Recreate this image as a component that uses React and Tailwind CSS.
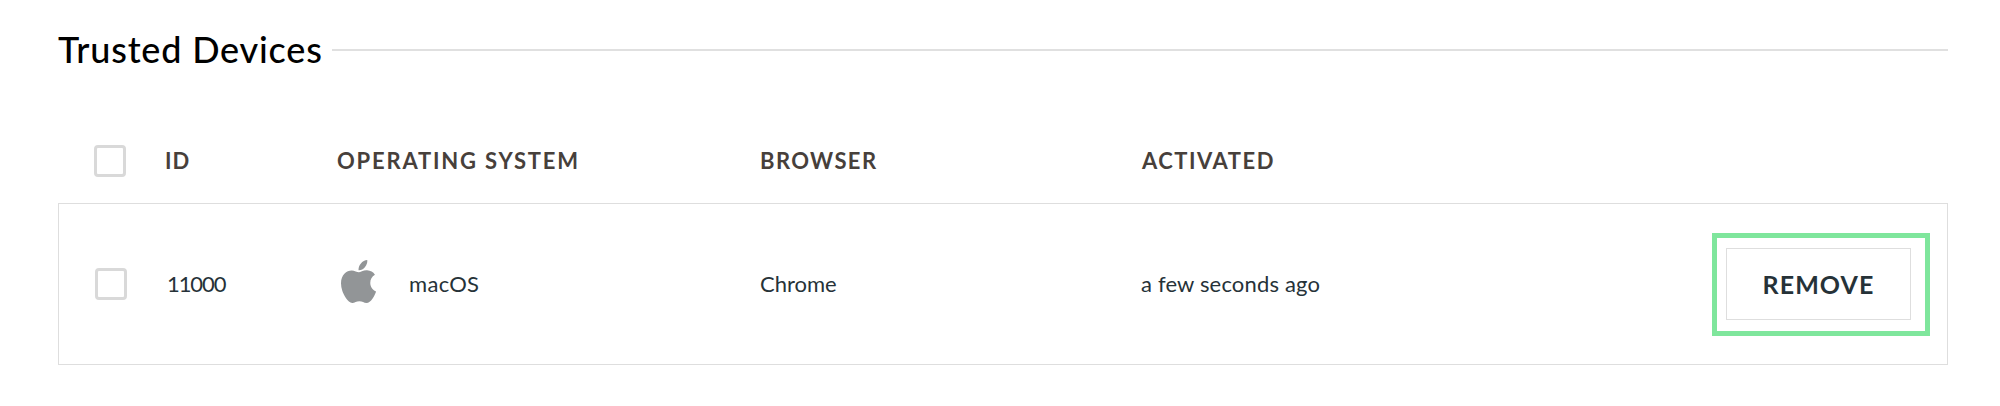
const devices = [
  { id: "11000", os: "macOS", browser: "Chrome", activated: "a few seconds ago" },
];

function Checkbox({ label }) {
  return (
    <span
      role="checkbox"
      aria-checked="false"
      aria-label={label}
      className="block size-8 rounded-[4px] border-3 border-[#d9d9d9] bg-white"
    />
  );
}

function AppleIcon() {
  return (
    <svg viewBox="4 31 376 449" preserveAspectRatio="none" className="mb-1.5 h-[43px] w-[35px] fill-[#929597]" aria-hidden="true">
      <path d="M318.7 268.7c-.2-36.700 16.400-64.400 50-84.800-18.800-26.900-47.200-41.700-84.700-44.600-35.500-2.800-74.300 20.700-88.500 20.700-15 0-49.400-19.700-76.400-19.700C63.300 141.200 4 184.800 4 273.500q0 39.300 14.400 81.200c12.800 36.700 59 126.700 107.200 125.200 25.200-.6 43-17.900 75.800-17.900 31.800 0 48.300 17.900 76.400 17.900 48.600-.7 90.400-82.500 102.600-119.300-65.200-30.700-61.700-90-61.700-91.900zm-56.600-164.200c27.300-32.400 24.800-61.900 24-72.500-24.100 1.400-52 16.400-67.900 34.900-17.500 19.800-27.800 44.300-25.600 71.900 26.100 2 49.900-11.400 69.500-34.300z" />
    </svg>
  );
}

export default function App() {
  return (
    <main className="h-[406px] w-[2000px] overflow-hidden bg-white pl-[58px] pr-[52px] font-['Lato',sans-serif]">
      <div className="flex h-[98px] items-center gap-[10px] pt-[2px]">
        <h1 className="-mt-[2px] w-[264px] whitespace-nowrap text-[36px] font-medium leading-[44px] tracking-[0.8px] text-black">
          Trusted Devices
        </h1>
        <div className="h-[2px] flex-1 bg-[#e0e0e0]" />
      </div>

      <div className="grid h-[105px] grid-cols-[72px_171px_423px_382px_1fr] items-center pl-[36px] pt-[20px] text-[22px] font-bold leading-7 text-[#47403b]">
        <div className="pt-[1px]">
          <Checkbox label="Select all devices" />
        </div>
        <div className="-ml-px tracking-[1px]">ID</div>
        <div className="tracking-[1.8px]">OPERATING SYSTEM</div>
        <div className="tracking-[1.4px]">BROWSER</div>
        <div className="tracking-[1.5px]">ACTIVATED</div>
      </div>

      {devices.map((d) => (
        <div
          key={d.id}
          className="grid h-[162px] grid-cols-[72px_174px_419px_381px_1fr_218px] items-center border border-[#dedede] pl-[36px] pr-[17px] text-[22px] leading-7 text-[#263238]"
        >
          <Checkbox label={`Select device ${d.id}`} />
          <div className="tracking-[-1.1px]">{d.id}</div>
          <div className="flex items-center gap-[33px]">
            <AppleIcon />
            <span className="tracking-[0.3px]">{d.os}</span>
          </div>
          <div>{d.browser}</div>
          <div className="tracking-[0.17px]">{d.activated}</div>
          <div className="flex h-[103px] items-center border-[5px] border-[#7fe69c] pl-[9px]">
            <button className="h-[72px] w-[185px] shrink-0 border border-[#dedede] bg-white text-[25px] font-bold tracking-[1.1px]">
              REMOVE
            </button>
          </div>
        </div>
      ))}
    </main>
  );
}
